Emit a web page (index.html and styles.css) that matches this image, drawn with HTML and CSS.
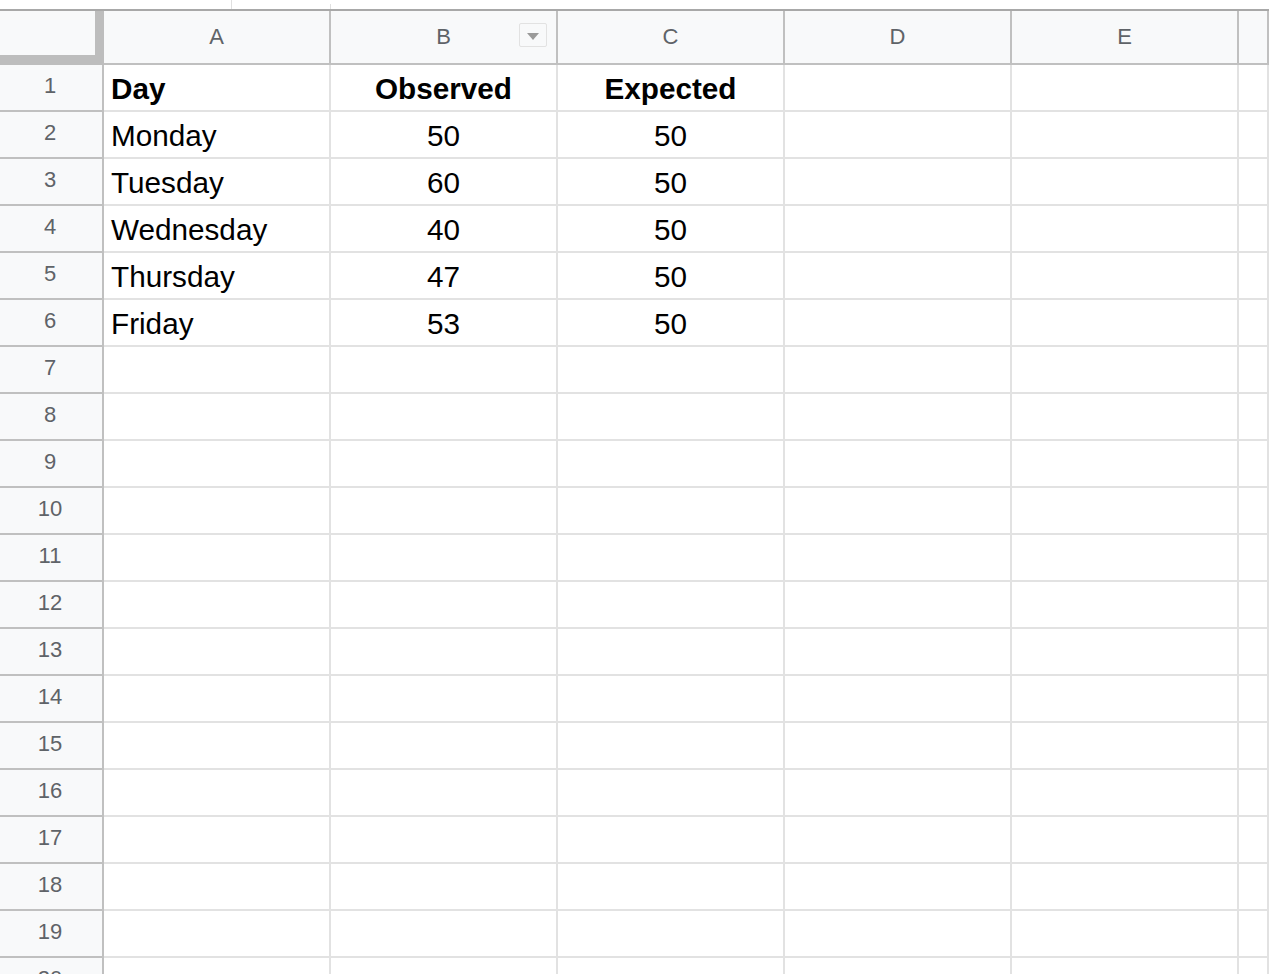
FILE: index.html
```
<!DOCTYPE html>
<html lang="en">

<head>
    <meta charset="UTF-8">
    <meta name="viewport" content="width=device-width, initial-scale=1.0">
    <title>Observed vs Expected</title>
    <link rel="stylesheet" href="styles.css">
</head>

<body>
    <div class="topstrip">
        <span class="tick tick-a"></span>
        <span class="tick tick-b"></span>
    </div>

    <div class="sheet">
        <div class="row head">
            <div class="corner"></div>
            <div class="col">A</div>
            <div class="col has-filter">B<span class="filter"></span></div>
            <div class="col">C</div>
            <div class="col">D</div>
            <div class="col">E</div>
            <div class="col"></div>
        </div>

        <div class="row">
            <div class="num">1</div>
            <div class="cell bold">Day</div>
            <div class="cell bold center">Observed</div>
            <div class="cell bold center">Expected</div>
            <div class="cell"></div>
            <div class="cell"></div>
            <div class="cell"></div>
        </div>
        <div class="row">
            <div class="num">2</div>
            <div class="cell">Monday</div>
            <div class="cell center">50</div>
            <div class="cell center">50</div>
            <div class="cell"></div>
            <div class="cell"></div>
            <div class="cell"></div>
        </div>
        <div class="row">
            <div class="num">3</div>
            <div class="cell">Tuesday</div>
            <div class="cell center">60</div>
            <div class="cell center">50</div>
            <div class="cell"></div>
            <div class="cell"></div>
            <div class="cell"></div>
        </div>
        <div class="row">
            <div class="num">4</div>
            <div class="cell">Wednesday</div>
            <div class="cell center">40</div>
            <div class="cell center">50</div>
            <div class="cell"></div>
            <div class="cell"></div>
            <div class="cell"></div>
        </div>
        <div class="row">
            <div class="num">5</div>
            <div class="cell">Thursday</div>
            <div class="cell center">47</div>
            <div class="cell center">50</div>
            <div class="cell"></div>
            <div class="cell"></div>
            <div class="cell"></div>
        </div>
        <div class="row">
            <div class="num">6</div>
            <div class="cell">Friday</div>
            <div class="cell center">53</div>
            <div class="cell center">50</div>
            <div class="cell"></div>
            <div class="cell"></div>
            <div class="cell"></div>
        </div>
        <div id="empty-rows"></div>
    </div>

    <script>
        document.addEventListener("DOMContentLoaded", function () {
            const emptyRows = document.getElementById('empty-rows');
            for (let i = 7; i <= 20; i++) {
                const row = document.createElement('div');
                row.className = 'row';
                let html = `<div class="num">${i}</div>`;
                for (let c = 0; c < 6; c++) {
                    html += '<div class="cell"></div>';
                }
                row.innerHTML = html;
                emptyRows.appendChild(row);
            }
        });
    </script>
</body>

</html>
```

FILE: styles.css
```
body {
    margin: 0;
    padding: 0;
    background-color: #fff;
    font-family: "Liberation Sans", Arial, sans-serif;
    height: 974px;
    overflow: hidden;
}

.topstrip {
    height: 9px;
    display: flex;
    background-color: #fff;
}

.tick {
    width: 1px;
    height: 9px;
    background-color: #e0e0e0;
}

.tick-a {
    margin-left: 231px;
}

.tick-b {
    margin-left: 98px;
    height: 5px;
    margin-top: 4px;
}

.sheet {
    display: flex;
    flex-direction: column;
}

.row {
    display: grid;
    grid-template-columns: 104px repeat(5, 227px) 1fr;
    height: 47px;
    flex-shrink: 0;
}

.row.head {
    height: 56px;
    border-top: 2px solid #a8a8a8;
    box-sizing: border-box;
}

.corner {
    background-color: #f8f9fa;
    border-right: 9px solid #bdbdbd;
    border-bottom: 10px solid #bdbdbd;
}

.col {
    position: relative;
    display: flex;
    align-items: center;
    justify-content: center;
    background-color: #f8f9fa;
    border-right: 2px solid #c0c0c0;
    border-bottom: 2px solid #c0c0c0;
    color: #5f6368;
    font-size: 22px;
}

.filter {
    position: absolute;
    right: 9px;
    top: 12px;
    width: 26px;
    height: 22px;
    border: 1.5px solid #e2e2e2;
    border-radius: 2px;
    background-color: #f8f9fa;
    display: flex;
    align-items: center;
    justify-content: center;
}

.filter::after {
    content: "";
    border-left: 6px solid transparent;
    border-right: 6px solid transparent;
    border-top: 7px solid #9a9a9a;
    margin-top: 2px;
}

.num {
    display: flex;
    align-items: center;
    justify-content: center;
    background-color: #f8f9fa;
    border-right: 2px solid #c0c0c0;
    border-bottom: 2px solid #c0c0c0;
    color: #5f6368;
    font-size: 22px;
    padding: 0 2px 3px 0;
}

.cell {
    display: flex;
    align-items: center;
    padding: 2px 7px 0;
    border-right: 2px solid #e2e2e2;
    border-bottom: 2px solid #e2e2e2;
    color: #000;
    font-size: 29.7px;
    white-space: nowrap;
    overflow: hidden;
}

.cell.center {
    justify-content: center;
}

.cell.bold {
    font-weight: bold;
}
```
